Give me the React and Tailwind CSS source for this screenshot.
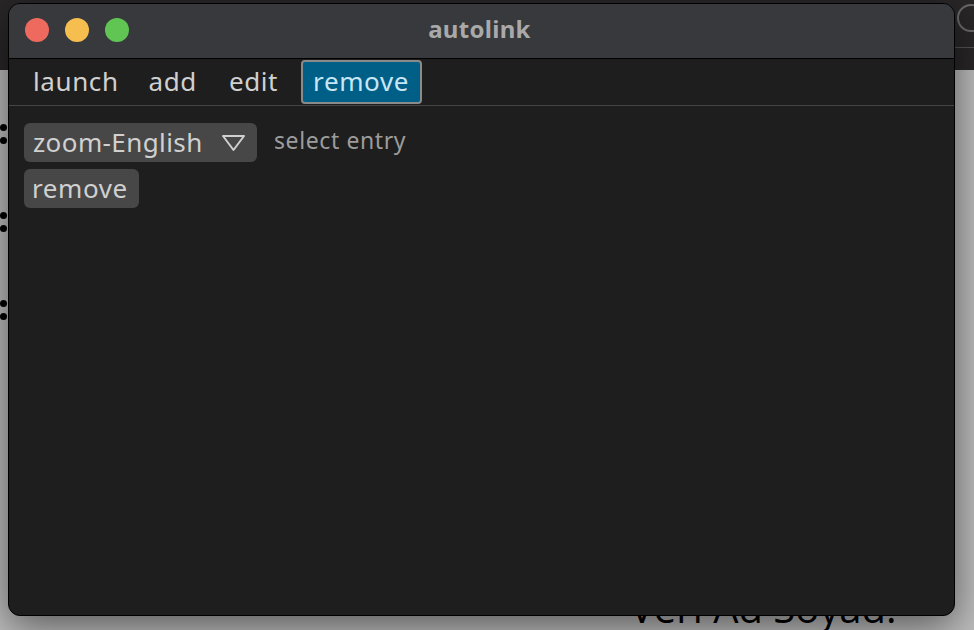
import React from "react";

const font = { fontFamily: '"Noto Sans", "DejaVu Sans", sans-serif' };

const Desktop = ({ children }) => (
  <div className="relative w-[974px] h-[630px] overflow-hidden bg-[#bdbdbd]">
    <div className="absolute left-0 top-0 w-full h-[70px] bg-[#2a2729]" />
    {[127, 140, 215, 228, 303, 316].map((y) => (
      <div
        key={y}
        className="absolute left-0 w-[7px] h-[7px] rounded-full bg-black"
        style={{ top: y - 3 }}
      />
    ))}
    <div className="absolute left-[955px] top-[47px] w-[19px] h-px bg-[#555]" />
    <div className="absolute left-[957px] top-[4px] w-[28px] h-[28px] rounded-full border-2 border-[#6b6b6b]" />
    <div
      className="absolute left-[630px] top-[588px] text-[40px] leading-none text-black"
      style={{ fontFamily: '"Open Sans", sans-serif' }}
    >
      Veri Ad Soyad:
    </div>
    {children}
  </div>
);

const App = () => {
  const menu = [
    ["launch", "ml-0"],
    ["add", "ml-[30px]"],
    ["edit", "ml-[32px]"],
  ];
  return (
    <Desktop>
      <div
        className="absolute left-[8px] top-[3px] w-[947px] h-[613px] rounded-[12px] bg-[#1e1e1e] border border-black shadow-[0_10px_40px_rgba(0,0,0,0.55)] overflow-hidden flex flex-col"
        style={font}
      >
        <div className="relative h-[55px] bg-[#38393d] border-b border-black flex items-center shrink-0">
          <div className="flex gap-[16px] pl-[16px] mb-[2px]">
            <span className="w-[24px] h-[24px] rounded-full bg-[#ee6a5f]" />
            <span className="w-[24px] h-[24px] rounded-full bg-[#f5be4f]" />
            <span className="w-[24px] h-[24px] rounded-full bg-[#61c554]" />
          </div>
          <div className="absolute inset-0 flex items-center justify-center pointer-events-none">
            <span className="text-[24px] font-bold tracking-[0.3px] text-[#a9a9a9] ml-[-4px] mb-[4px]">
              autolink
            </span>
          </div>
        </div>
        <div className="h-[47px] flex items-center pl-[24px] border-b border-[#444] shrink-0">
          {menu.map(([m, cls]) => (
            <span
              key={m}
              className={`${cls} text-[26px] tracking-[0.6px] text-[#d0d0d0] leading-none mb-[2px]`}
            >
              {m}
            </span>
          ))}
          <span className="ml-[23px] h-[44px] pl-[10px] pr-[11px] flex items-center rounded-[4px] bg-[#005f87] border-2 border-[#8a8a8a] text-[26px] tracking-[0.6px] text-[#c8e6f5] leading-none">
            <span className="mb-[2px]">remove</span>
          </span>
        </div>
        <div className="flex flex-col items-start gap-[7px] pl-[15px] pt-[17px]">
          <div className="flex items-center gap-[17px]">
            <div className="h-[39px] w-[233px] flex items-center justify-between pl-[9px] pr-[11px] rounded-[6px] bg-[#474747]">
              <span className="text-[26px] tracking-[0.4px] text-[#d0d0d0] leading-none mb-[2px]">
                zoom-English
              </span>
              <svg width="25" height="18" viewBox="0 0 25 18">
                <path
                  d="M2 2 H23 L12.5 16 Z"
                  fill="none"
                  stroke="#d0d0d0"
                  strokeWidth="2"
                  strokeLinejoin="round"
                />
              </svg>
            </div>
            <span className="text-[23px] tracking-[0.6px] text-[#9c9c9c] leading-none mb-[4px]">
              select entry
            </span>
          </div>
          <div className="h-[39px] pl-[8px] pr-[11px] flex items-center rounded-[6px] bg-[#474747]">
            <span className="text-[26px] tracking-[0.6px] text-[#d0d0d0] leading-none mb-[2px]">
              remove
            </span>
          </div>
        </div>
      </div>
    </Desktop>
  );
};

export default App;
